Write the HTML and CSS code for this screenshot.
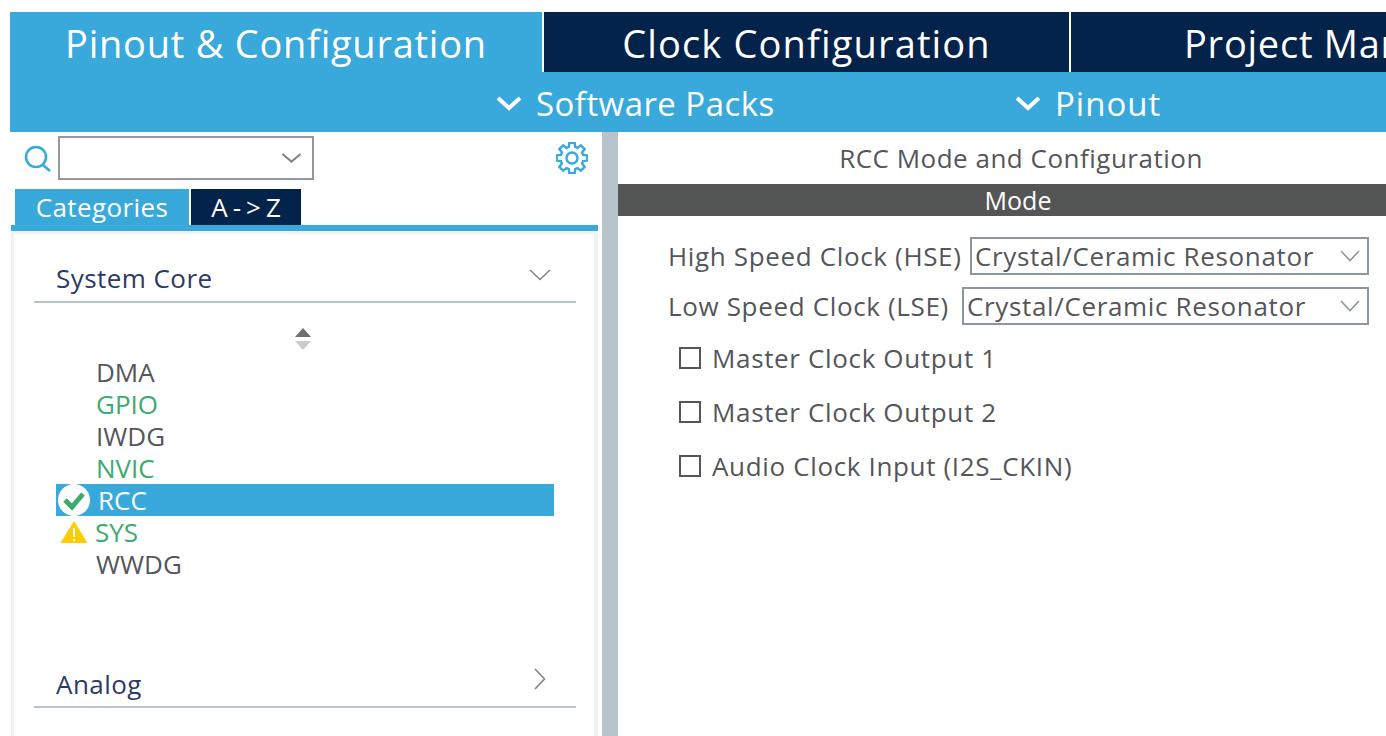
FILE: index.html
```html
<!DOCTYPE html>
<html lang="en">
<head>
    <meta charset="UTF-8">
    <title>RCC Mode and Configuration</title>
    <link rel="stylesheet" href="styles.css">
</head>
<body>
    <div class="app">
        <!-- top tabs -->
        <div class="tabs">
            <div class="tab tab-pinout">Pinout &amp; Configuration</div>
            <div class="tab tab-clock">Clock Configuration</div>
            <div class="tab tab-project">Project Manager</div>
        </div>

        <!-- sub menu -->
        <div class="submenu">
            <div class="submenu-item item-packs">
                <svg class="submenu-chevron" viewBox="0 0 26 16"><polyline points="2,3 13,13 24,3"/></svg>Software Packs
            </div>
            <div class="submenu-item item-pinout">
                <svg class="submenu-chevron" viewBox="0 0 26 16"><polyline points="2,3 13,13 24,3"/></svg>Pinout
            </div>
        </div>

        <div class="main">
            <!-- left panel -->
            <div class="sidebar">
                <div class="search-row">
                    <svg class="search-icon" viewBox="0 0 28 28"><circle cx="12" cy="12" r="10"/><line x1="19" y1="20" x2="26" y2="26"/></svg>
                    <div class="search-box">
                        <svg class="search-chevron" viewBox="0 0 22 11"><polyline points="1,1 11,9.500 21,1"/></svg>
                    </div>
                    <svg class="gear-icon" viewBox="-16 -16 32 32">
                        <polygon points="-3.17,-11.05 -2.69,-15.26 2.69,-15.26 3.17,-11.05 5.57,-10.05 8.89,-12.69 12.69,-8.89 10.05,-5.57 11.05,-3.17 15.26,-2.69 15.26,2.69 11.05,3.17 10.05,5.57 12.69,8.89 8.89,12.69 5.57,10.05 3.17,11.05 2.69,15.26 -2.69,15.26 -3.17,11.05 -5.57,10.05 -8.89,12.69 -12.69,8.89 -10.05,5.57 -11.05,3.17 -15.26,2.69 -15.26,-2.69 -11.05,-3.17 -10.05,-5.57 -12.69,-8.89 -8.89,-12.69 -5.57,-10.05"/>
                        <circle r="5.5"/>
                    </svg>
                </div>

                <div class="side-tabs">
                    <div class="side-tab side-tab-active">Categories</div>
                    <div class="side-tab side-tab-dark">A-&gt;Z</div>
                </div>

                <div class="list-panel">
                    <div class="list-inner">
                        <div class="group-head">
                            <span>System Core</span>
                            <svg class="group-chevron" viewBox="0 0 22 12"><polyline points="1,1 11,10.5 21,1"/></svg>
                        </div>

                        <div class="scroll-arrows">
                            <svg viewBox="0 0 16 22">
                                <polygon class="arrow-up" points="8,0 16,9 0,9"/>
                                <polygon class="arrow-down" points="0,13 16,13 8,22"/>
                            </svg>
                        </div>

                        <ul class="periph-list">
                            <li class="periph">DMA</li>
                            <li class="periph periph-green">GPIO</li>
                            <li class="periph">IWDG</li>
                            <li class="periph periph-green">NVIC</li>
                            <li class="periph periph-selected">
                                <svg class="periph-icon" viewBox="0 0 32 32">
                                    <circle cx="16" cy="16" r="16" fill="#ffffff"/>
                                    <polyline points="7,16 14,23 25,10" fill="none" stroke="#3cab6b" stroke-width="5"/>
                                </svg>RCC
                            </li>
                            <li class="periph periph-green">
                                <svg class="periph-icon" viewBox="0 0 28 24">
                                    <path d="M14 1 L27 22 Q27.500 23 26 23 L2 23 Q0.500 23 1 22 Z" fill="#ffcc00"/>
                                    <rect x="13" y="8" width="2" height="9" fill="#ffffff"/>
                                    <rect x="13" y="19" width="2" height="2" fill="#ffffff"/>
                                </svg>SYS
                            </li>
                            <li class="periph">WWDG</li>
                        </ul>

                        <div class="group-head group-analog">
                            <span>Analog</span>
                            <svg class="group-chevron-right" viewBox="0 0 12 22"><polyline points="1,1 10.500,11 1,21"/></svg>
                        </div>
                    </div>
                </div>
            </div>

            <div class="splitter"></div>

            <!-- right panel -->
            <div class="content">
                <div class="content-title">RCC Mode and Configuration</div>
                <div class="mode-bar">Mode</div>

                <div class="mode-form">
                    <div class="field-row">
                        <span class="field-label">High Speed Clock (HSE)</span>
                        <div class="field-select select-hse">
                            <span>Crystal/Ceramic Resonator</span>
                            <svg class="select-chevron" viewBox="0 0 20 12"><polyline points="1,1 10,10.500 19,1"/></svg>
                        </div>
                    </div>
                    <div class="field-row">
                        <span class="field-label">Low Speed Clock (LSE)</span>
                        <div class="field-select select-lse">
                            <span>Crystal/Ceramic Resonator</span>
                            <svg class="select-chevron" viewBox="0 0 20 12"><polyline points="1,1 10,10.500 19,1"/></svg>
                        </div>
                    </div>

                    <div class="check-list">
                        <div class="check-row"><span class="check-box"></span>Master Clock Output 1</div>
                        <div class="check-row"><span class="check-box"></span>Master Clock Output 2</div>
                        <div class="check-row"><span class="check-box"></span>Audio Clock Input (I2S_CKIN)</div>
                    </div>
                </div>
            </div>
        </div>
    </div>
</body>
</html>
```

FILE: styles.css
```css
html, body {
    height: 100%;
    overflow: hidden;
}
body {
    margin: 0;
    padding: 12px 0 0 10px;
    box-sizing: border-box;
    background-color: #ffffff;
    font-family: "Open Sans", "Noto Sans", sans-serif;
    color: #54565a;
}
.app {
    width: 1376px;
    overflow: hidden;
}

/* top tabs */
.tabs {
    display: flex;
    height: 60px;
    background-color: #ffffff;
}
.tab {
    flex: none;
    height: 60px;
    line-height: 63px;
    font-size: 38px;
    letter-spacing: 0.75px;
    color: #ffffff;
    text-align: center;
    white-space: nowrap;
    box-sizing: border-box;
}
.tab-pinout {
    width: 532px;
    background-color: #39a9dc;
}
.tab-clock {
    width: 525px;
    margin-left: 2px;
    letter-spacing: 1.15px;
    background-color: #03234b;
}
.tab-project {
    width: 480px;
    margin-left: 2px;
    padding-left: 113px;
    text-align: left;
    background-color: #03234b;
}

/* sub menu */
.submenu {
    display: flex;
    height: 60px;
    padding-top: 4px;
    box-sizing: border-box;
    background-color: #39a9dc;
    color: #ffffff;
    font-size: 33px;
    letter-spacing: 0.45px;
    line-height: 56px;
}
.submenu-item {
    display: flex;
    align-items: center;
    white-space: nowrap;
}
.item-packs {
    margin-left: 486px;
    width: 519px;
}
.item-pinout {
    letter-spacing: 1px;
}
.submenu-chevron {
    width: 26px;
    height: 16px;
    margin-right: 14px;
    margin-top: -2px;
    fill: none;
    stroke: #ffffff;
    stroke-width: 4;
}

.main {
    display: flex;
    height: 604px;
}

/* left panel */
.sidebar {
    width: 592px;
    flex: none;
}
.search-row {
    display: flex;
    align-items: flex-start;
    height: 57px;
    padding: 4px 14px 0 14px;
    box-sizing: border-box;
}
.search-icon {
    width: 28px;
    height: 28px;
    margin: 9px 6px 0 0;
    fill: none;
    stroke: #39a9dc;
    stroke-width: 2.6;
}
.search-box {
    display: flex;
    align-items: center;
    justify-content: flex-end;
    width: 256px;
    height: 44px;
    padding-right: 10px;
    border: 2px solid #93989c;
    box-sizing: border-box;
}
.search-chevron {
    width: 21px;
    height: 10px;
    fill: none;
    stroke: #808488;
    stroke-width: 2.2;
}
.gear-icon {
    width: 32px;
    height: 32px;
    margin: 6px 0 0 auto;
    fill: none;
    stroke: #39a9dc;
    stroke-width: 2.4;
}
.side-tabs {
    display: flex;
    height: 36px;
    padding-left: 5px;
}
.side-tab {
    height: 36px;
    line-height: 36px;
    text-align: center;
    font-size: 26px;
    color: #ffffff;
}
.side-tab-active {
    width: 174px;
    letter-spacing: 0.4px;
    background-color: #39a9dc;
}
.side-tab-dark {
    width: 110px;
    margin-left: 2px;
    text-indent: 5px;
    letter-spacing: 5px;
    background-color: #03234b;
}
.list-panel {
    height: 505px;
    margin-left: 1px;
    margin-right: 4px;
    background-color: #f0f1f3;
    border-top: 6px solid #39a9dc;
    padding: 3px 4px 0 3px;
}
.list-inner {
    height: 100%;
    background-color: #ffffff;
    padding: 0 18px 0 20px;
}
.group-head {
    display: flex;
    justify-content: space-between;
    align-items: center;
    height: 69px;
    padding: 20px 25px 0 22px;
    box-sizing: border-box;
    border-bottom: 2px solid #b8c4cc;
    font-size: 26px;
    letter-spacing: 0.45px;
    color: #2b3a66;
}
.group-chevron {
    width: 22px;
    height: 12px;
    margin-top: -6px;
    fill: none;
    stroke: #7f8388;
    stroke-width: 1.6;
}
.group-chevron-right {
    width: 12px;
    height: 22px;
    margin: -10px 5px 0 0;
    fill: none;
    stroke: #7f8388;
    stroke-width: 1.6;
}
.group-analog {
    margin-top: 59px;
    padding-top: 23px;
}
.scroll-arrows {
    display: flex;
    justify-content: center;
    padding-top: 25px;
    height: 28px;
    margin-left: -4px;
}
.scroll-arrows svg {
    width: 16px;
    height: 22px;
}
.arrow-up {
    fill: #6c6e70;
}
.arrow-down {
    fill: #c9cbcd;
}
.periph-list {
    list-style: none;
    margin: 0 0 0 22px;
    padding: 0;
    width: 498px;
}
.periph {
    display: flex;
    align-items: center;
    height: 32px;
    line-height: 32px;
    padding-left: 40px;
    font-size: 26px;
    color: #54565a;
}
.periph-green {
    color: #3cab6b;
}
.periph-selected {
    background-color: #39a9dc;
    color: #ffffff;
}
.periph-icon {
    width: 32px;
    height: 32px;
    margin: 0 8px 0 -38px;
    flex: none;
}
.periph-green .periph-icon {
    width: 28px;
    height: 24px;
    margin: 0 7px 0 -36px;
}

.splitter {
    width: 16px;
    flex: none;
    background-color: #b8c4cc;
}

/* right panel */
.content {
    flex: 1;
    min-width: 0;
}
.content-title {
    width: 806px;
    height: 52px;
    line-height: 52px;
    text-align: center;
    font-size: 26px;
    letter-spacing: 0.5px;
    white-space: nowrap;
}
.mode-bar {
    height: 32px;
    line-height: 33px;
    padding-left: 32px;
    background-color: #545655;
    color: #ffffff;
    text-align: center;
    font-size: 25px;
}
.mode-form {
    padding: 21px 17px 0 50px;
    font-size: 26px;
    letter-spacing: 0.65px;
}
.field-row {
    display: flex;
    align-items: center;
    justify-content: space-between;
    height: 38px;
    margin-bottom: 12px;
    white-space: nowrap;
}
.field-select {
    display: flex;
    align-items: center;
    justify-content: space-between;
    height: 38px;
    padding: 0 7px 0 3px;
    box-sizing: border-box;
    border: 2px solid #8c969c;
}
.select-hse {
    width: 399px;
}
.select-lse {
    width: 407px;
}
.select-chevron {
    width: 20px;
    height: 12px;
    fill: none;
    stroke: #8c969c;
    stroke-width: 1.6;
}
.check-list {
    margin-top: -6px;
}
.check-row {
    display: flex;
    align-items: center;
    height: 54px;
    margin-left: 11px;
    line-height: 54px;
    white-space: nowrap;
}
.check-box {
    width: 22px;
    height: 22px;
    margin-right: 11px;
    border: 2px solid #54565a;
    box-sizing: border-box;
    flex: none;
}
```
